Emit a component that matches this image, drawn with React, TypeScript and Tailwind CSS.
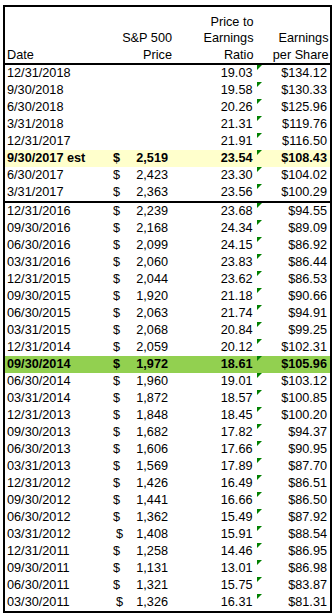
import React from "react";

type Row = {
  date: string;
  price?: string;
  pe: string;
  eps: string;
  hl?: "est" | "now";
  shift?: boolean;
};

const recent: Row[] = [
  { date: "12/31/2018", pe: "19.03", eps: "$134.12" },
  { date: "9/30/2018", pe: "19.58", eps: "$130.33" },
  { date: "6/30/2018", pe: "20.26", eps: "$125.96" },
  { date: "3/31/2018", pe: "21.31", eps: "$119.76" },
  { date: "12/31/2017", pe: "21.91", eps: "$116.50" },
  { date: "9/30/2017 est", price: "2,519", pe: "23.54", eps: "$108.43", hl: "est" },
  { date: "6/30/2017", price: "2,423", pe: "23.30", eps: "$104.02" },
  { date: "3/31/2017", price: "2,363", pe: "23.56", eps: "$100.29" },
];

const history: Row[] = [
  { date: "12/31/2016", price: "2,239", pe: "23.68", eps: "$94.55" },
  { date: "09/30/2016", price: "2,168", pe: "24.34", eps: "$89.09" },
  { date: "06/30/2016", price: "2,099", pe: "24.15", eps: "$86.92" },
  { date: "03/31/2016", price: "2,060", pe: "23.83", eps: "$86.44" },
  { date: "12/31/2015", price: "2,044", pe: "23.62", eps: "$86.53" },
  { date: "09/30/2015", price: "1,920", pe: "21.18", eps: "$90.66" },
  { date: "06/30/2015", price: "2,063", pe: "21.74", eps: "$94.91" },
  { date: "03/31/2015", price: "2,068", pe: "20.84", eps: "$99.25" },
  { date: "12/31/2014", price: "2,059", pe: "20.12", eps: "$102.31" },
  { date: "09/30/2014", price: "1,972", pe: "18.61", eps: "$105.96", hl: "now" },
  { date: "06/30/2014", price: "1,960", pe: "19.01", eps: "$103.12" },
  { date: "03/31/2014", price: "1,872", pe: "18.57", eps: "$100.85" },
  { date: "12/31/2013", price: "1,848", pe: "18.45", eps: "$100.20" },
  { date: "09/30/2013", price: "1,682", pe: "17.82", eps: "$94.37" },
  { date: "06/30/2013", price: "1,606", pe: "17.66", eps: "$90.95" },
  { date: "03/31/2013", price: "1,569", pe: "17.89", eps: "$87.70" },
  { date: "12/31/2012", price: "1,426", pe: "16.49", eps: "$86.51" },
  { date: "09/30/2012", price: "1,441", pe: "16.66", eps: "$86.50" },
  { date: "06/30/2012", price: "1,362", pe: "15.49", eps: "$87.92" },
  { date: "03/31/2012", price: "1,408", pe: "15.91", eps: "$88.54", shift: true },
  { date: "12/31/2011", price: "1,258", pe: "14.46", eps: "$86.95" },
  { date: "09/30/2011", price: "1,131", pe: "13.01", eps: "$86.98" },
  { date: "06/30/2011", price: "1,321", pe: "15.75", eps: "$83.87" },
  { date: "03/30/2011", price: "1,326", pe: "16.31", eps: "$81.31", shift: true },
];

const cols = "grid grid-cols-[100px_69px_83px_73px]";

// excel's little green "number stored as text" marker
function Flag() {
  return (
    <svg className="absolute left-0 top-0" width="5" height="5" viewBox="0 0 5 5">
      <polygon points="0,0 5,0 0,5" fill="#008000" />
    </svg>
  );
}

function DataRow({ row }: { row: Row }) {
  const bg =
    row.hl === "est" ? "bg-[#ffffcc]" : row.hl === "now" ? "bg-[#92d050]" : "";
  const weight = row.hl ? "font-bold" : "";
  return (
    <div className={`${cols} h-[17px] leading-[17px] ${bg} ${weight}`}>
      <div className="pl-[2px] whitespace-nowrap">{row.date}</div>
      <div className="flex">
        {row.price && (
          <>
            <span className={row.shift ? "pl-[11px]" : "pl-[8px]"}>$</span>
            <span className="ml-auto pr-[6px]">{row.price}</span>
          </>
        )}
      </div>
      <div className="text-right pr-[4.5px]">{row.pe}</div>
      <div className="relative text-right pr-[3px]">
        <Flag />
        {row.eps}
      </div>
    </div>
  );
}

export default function App() {
  return (
    <div className="w-[332px] h-[613px] overflow-hidden bg-white pl-[3px] pt-[5px] text-black font-['Liberation_Sans',Arial,sans-serif] text-[12.7px]">
      <div className="w-[329px] border-2 border-black">
        <div className={`${cols} h-[58px] border-b-2 border-black items-end leading-[16.5px]`}>
          <div className="pl-[2px]">Date</div>
          <div className="text-right pr-[2px]">
            S&amp;P 500
            <br />
            Price
          </div>
          <div className="text-right pr-[3.5px]">
            Price to
            <br />
            Earnings
            <br />
            Ratio
          </div>
          <div className="text-right pr-[1.5px]">
            Earnings
            <br />
            per Share
          </div>
        </div>

        <div>
          {recent.map((r) => (
            <DataRow key={r.date} row={r} />
          ))}
        </div>

        <div className="border-t-2 border-black">
          {history.map((r) => (
            <DataRow key={r.date} row={r} />
          ))}
        </div>
      </div>
    </div>
  );
}
